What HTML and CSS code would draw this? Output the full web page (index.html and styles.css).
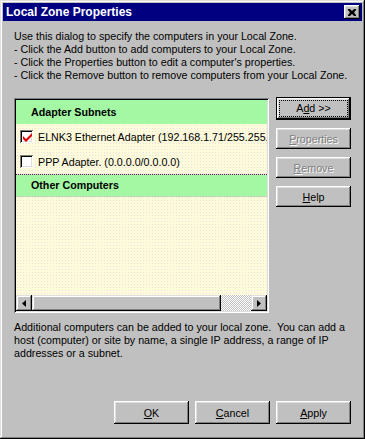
FILE: index.html
```html
<!DOCTYPE html>
<html lang="en">
<head>
    <meta charset="UTF-8">
    <title>Local Zone Properties</title>
    <link rel="stylesheet" href="styles.css">
</head>
<body>
    <div class="window">
        <div class="titlebar">
            <span class="title">Local Zone Properties</span>
            <button class="close-btn">
                <svg width="8" height="7" viewBox="0 0 8 7"><path d="M0 0h2l2 2 2-2h2v1L6 3.5 8 6v1H6L4 5 2 7H0V6l2-2.5L0 1z" fill="#000"/></svg>
            </button>
        </div>

        <div class="intro">
            Use this dialog to specify the computers in your Local Zone.<br>
            - Click the Add button to add computers to your Local Zone.<br>
            - Click the Properties button to edit a computer's properties.<br>
            - Click the Remove button to remove computers from your Local Zone.
        </div>

        <div class="middle">
            <div class="listbox">
                <div class="list-inner">
                    <div class="group-head">Adapter Subnets</div>
                    <div class="item">
                        <span class="check">
                            <svg width="9" height="9" viewBox="0 0 9 9"><path d="M0 3l3 3 6-6v3L3 9 0 6z" fill="#e00000"/></svg>
                        </span>
                        <span class="label">ELNK3 Ethernet Adapter (192.168.1.71/255.255.255.0)</span>
                    </div>
                    <div class="item">
                        <span class="check"></span>
                        <span class="label">PPP Adapter. (0.0.0.0/0.0.0.0)</span>
                    </div>
                    <div class="group-head second">Other Computers</div>
                    <div class="filler"></div>
                </div>
                <div class="hscroll">
                    <div class="arrow">
                        <svg width="4" height="7" viewBox="0 0 4 7"><path d="M4 0v7L0 3.5z" fill="#000"/></svg>
                    </div>
                    <div class="thumb"></div>
                    <div class="track"></div>
                    <div class="arrow">
                        <svg width="4" height="7" viewBox="0 0 4 7"><path d="M0 0v7l4-3.5z" fill="#000"/></svg>
                    </div>
                </div>
            </div>

            <div class="side-buttons">
                <button class="btn default"><span class="focus">A<u>d</u>d &gt;&gt;</span></button>
                <button class="btn disabled"><u>P</u>roperties</button>
                <button class="btn disabled"><u>R</u>emove</button>
                <button class="btn"><u>H</u>elp</button>
            </div>
        </div>

        <div class="note">
            Additional computers can be added to your local zone.&nbsp; You can add a<br>
            host (computer) or site by name, a single IP address, a range of IP<br>
            addresses or a subnet.
        </div>

        <div class="footer">
            <button class="btn"><u>O</u>K</button>
            <button class="btn"><u>C</u>ancel</button>
            <button class="btn"><u>A</u>pply</button>
        </div>
    </div>
</body>
</html>
```

FILE: styles.css
```css
body {
    margin: 0;
    background: #c0c0c0;
    font-family: "Liberation Sans", Arial, sans-serif;
    font-size: 10.7px;
    color: #000;
}
.window {
    width: 365px;
    height: 439px;
    box-sizing: border-box;
    padding: 3px;
    background: #c0c0c0;
    box-shadow: inset -1px -1px #000, inset 1px 1px #dfdfdf, inset -2px -2px #808080, inset 2px 2px #fff;
    display: flex;
    flex-direction: column;
}
.titlebar {
    height: 18px;
    background: #000080;
    display: flex;
    align-items: center;
    justify-content: space-between;
    padding: 0 2px 0 3px;
}
.title {
    color: #fff;
    font-weight: bold;
    font-size: 12px;
}
.close-btn {
    width: 16px;
    height: 14px;
    padding: 0;
    border: none;
    background: #c0c0c0;
    display: flex;
    align-items: center;
    justify-content: center;
    box-shadow: inset -1px -1px #000, inset 1px 1px #fff, inset -2px -2px #808080, inset 2px 2px #dfdfdf;
}
.intro {
    margin: 9px 0 0 11px;
    line-height: 13px;
    white-space: nowrap;
}
.middle {
    display: flex;
    margin: 16px 0 0 11px;
    gap: 7px;
}
.listbox {
    width: 255px;
    height: 215px;
    box-sizing: border-box;
    padding: 2px;
    box-shadow: inset 1px 1px #808080, inset -1px -1px #fff, inset 2px 2px #000, inset -2px -2px #dfdfdf;
    display: flex;
    flex-direction: column;
}
.list-inner {
    flex: 1;
    overflow: hidden;
    white-space: nowrap;
    background-color: #fcfcda;
    background-image: radial-gradient(circle, #f8dce6 0.45px, transparent 0.7px);
    background-size: 3px 3px;
    display: flex;
    flex-direction: column;
}
.group-head {
    flex: none;
    height: 24px;
    line-height: 24px;
    background: #a4f8a4;
    font-weight: bold;
    padding-left: 15px;
}
.group-head.second {
    height: 21px;
    line-height: 21px;
    border-top: 1px dotted #800080;
    border-bottom: 1px dotted #e8b0d0;
}
.item {
    flex: none;
    height: 25px;
    display: flex;
    align-items: center;
    padding-left: 4px;
}
.label {
    margin-left: 5px;
}
.check {
    flex: none;
    width: 13px;
    height: 13px;
    box-sizing: border-box;
    background: #fff;
    box-shadow: inset 1px 1px #808080, inset -1px -1px #fff, inset 2px 2px #000, inset -2px -2px #dfdfdf;
    display: flex;
    align-items: center;
    justify-content: center;
}
.check svg {
    margin: 1px 0 0 1px;
}
.filler {
    flex: 1;
}
.hscroll {
    height: 16px;
    display: flex;
}
.arrow {
    width: 16px;
    height: 16px;
    background: #c0c0c0;
    box-shadow: inset -1px -1px #000, inset 1px 1px #dfdfdf, inset -2px -2px #808080, inset 2px 2px #fff;
    display: flex;
    align-items: center;
    justify-content: center;
}
.thumb {
    width: 189px;
    background: #c0c0c0;
    box-shadow: inset -1px -1px #000, inset 1px 1px #dfdfdf, inset -2px -2px #808080, inset 2px 2px #fff;
}
.track {
    flex: 1;
    background-color: #fff;
    background-image: conic-gradient(#c0c0c0 25%, #fff 0 50%, #c0c0c0 0 75%, #fff 0);
    background-size: 2px 2px;
}
.side-buttons {
    display: flex;
    flex-direction: column;
    gap: 8px;
    margin-top: -1px;
}
.btn {
    width: 75px;
    height: 21px;
    padding: 0;
    border: none;
    background: #c0c0c0;
    font-family: "Liberation Sans", Arial, sans-serif;
    font-size: 10.7px;
    color: #000;
    box-shadow: inset -1px -1px #000, inset 1px 1px #fff, inset -2px -2px #808080, inset 2px 2px #dfdfdf;
}
.btn.default {
    height: 23px;
    box-shadow: inset 0 0 0 1px #000, inset -2px -2px #000, inset 2px 2px #fff, inset -3px -3px #808080, inset 3px 3px #dfdfdf;
}
.btn .focus {
    display: block;
    margin: 0 4px;
    line-height: 13px;
    padding: 1px 0;
    outline: 1px dotted #000;
}
.btn.disabled {
    color: #808080;
    text-shadow: 1px 1px 0 #fff;
}
.note {
    margin: 8px 0 0 11px;
    line-height: 13px;
    white-space: nowrap;
}
.footer {
    margin-top: auto;
    margin-bottom: 12px;
    display: flex;
    justify-content: flex-end;
    gap: 6px;
    padding-right: 11px;
}
.footer .btn {
    height: 23px;
}
```
